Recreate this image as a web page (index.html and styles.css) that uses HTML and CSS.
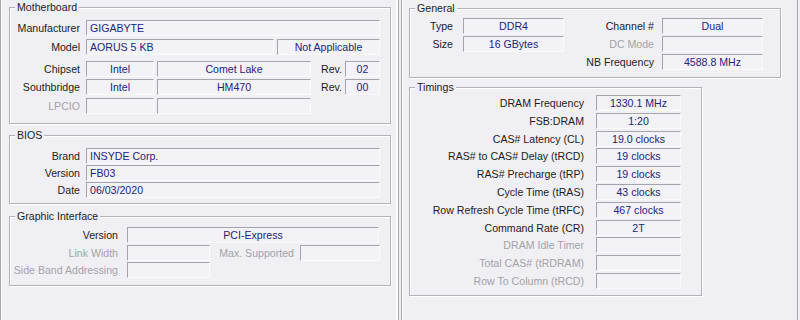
FILE: index.html
```html
<!DOCTYPE html>
<html>
<head>
<meta charset="utf-8">
<link rel="stylesheet" href="styles.css">
</head>
<body>
<div class="screen">
  <div class="win win-left">
    <div class="group mb">
      <span class="gtitle">Motherboard</span>
      <div class="row r-manu">
        <span class="lbl w70">Manufacturer</span>
        <span class="box left w294">GIGABYTE</span>
      </div>
      <div class="row r-model">
        <span class="lbl w70">Model</span>
        <span class="box left w188">AORUS 5 KB</span>
        <span class="box w103 ml3">Not Applicable</span>
      </div>
      <div class="row r-chip">
        <span class="lbl w70">Chipset</span>
        <span class="box w68">Intel</span>
        <span class="box w154 ml3">Comet Lake</span>
        <span class="lbl rev">Rev.</span>
        <span class="box w35">02</span>
      </div>
      <div class="row r-south">
        <span class="lbl w70">Southbridge</span>
        <span class="box w68">Intel</span>
        <span class="box w154 ml3">HM470</span>
        <span class="lbl rev">Rev.</span>
        <span class="box w35">00</span>
      </div>
      <div class="row r-lpc">
        <span class="lbl w70 dis">LPCIO</span>
        <span class="box w68"></span>
        <span class="box w154 ml3"></span>
      </div>
    </div>

    <div class="group bios">
      <span class="gtitle">BIOS</span>
      <div class="row">
        <span class="lbl w70">Brand</span>
        <span class="box left w294">INSYDE Corp.</span>
      </div>
      <div class="row g1">
        <span class="lbl w70">Version</span>
        <span class="box left w294">FB03</span>
      </div>
      <div class="row g1">
        <span class="lbl w70">Date</span>
        <span class="box left w294">06/03/2020</span>
      </div>
    </div>

    <div class="group gfx">
      <span class="gtitle">Graphic Interface</span>
      <div class="row">
        <span class="lbl w108">Version</span>
        <span class="box w252">PCI-Express</span>
      </div>
      <div class="row g2">
        <span class="lbl w108 dis">Link Width</span>
        <span class="box w83"></span>
        <span class="lbl dis maxs">Max. Supported</span>
        <span class="box w80"></span>
      </div>
      <div class="row g1">
        <span class="lbl w108 dis">Side Band Addressing</span>
        <span class="box w83"></span>
      </div>
    </div>
  </div>

  <div class="win win-right">
    <div class="group general">
      <span class="gtitle">General</span>
      <div class="ggrid">
        <span class="lbl">Type</span>
        <span class="box">DDR4</span>
        <span class="lbl">Channel #</span>
        <span class="box">Dual</span>
        <span class="lbl">Size</span>
        <span class="box">16 GBytes</span>
        <span class="lbl dis">DC Mode</span>
        <span class="box"></span>
        <span class="lbl c3">NB Frequency</span>
        <span class="box">4588.8 MHz</span>
      </div>
    </div>

    <div class="group timings">
      <span class="gtitle">Timings</span>
      <div class="tgrid">
        <span class="lbl">DRAM Frequency</span><span class="box">1330.1 MHz</span>
        <span class="lbl">FSB:DRAM</span><span class="box">1:20</span>
        <span class="lbl">CAS# Latency (CL)</span><span class="box">19.0 clocks</span>
        <span class="lbl">RAS# to CAS# Delay (tRCD)</span><span class="box">19 clocks</span>
        <span class="lbl">RAS# Precharge (tRP)</span><span class="box">19 clocks</span>
        <span class="lbl">Cycle Time (tRAS)</span><span class="box">43 clocks</span>
        <span class="lbl">Row Refresh Cycle Time (tRFC)</span><span class="box">467 clocks</span>
        <span class="lbl">Command Rate (CR)</span><span class="box">2T</span>
        <span class="lbl dis">DRAM Idle Timer</span><span class="box"></span>
        <span class="lbl dis">Total CAS# (tRDRAM)</span><span class="box"></span>
        <span class="lbl dis">Row To Column (tRCD)</span><span class="box"></span>
      </div>
    </div>
  </div>
</div>
</body>
</html>
```

FILE: styles.css
```css
* { box-sizing: border-box; }
html, body {
  margin: 0;
  padding: 0;
  background: #f0eff4;
}
body {
  font-family: "Liberation Sans", Arial, sans-serif;
  font-size: 10.6px;
  color: #1c1c1c;
  width: 800px;
  height: 320px;
  overflow: hidden;
}
.screen {
  display: flex;
  height: 320px;
}
.win {
  height: 320px;
  display: flex;
  flex-direction: column;
}
.win-left {
  width: 399px;
  border-left: 1px solid #a6a6ae;
  border-right: 1px solid #a6a6ae;
  box-shadow: inset -2px 0 0 #ffffff, inset 1px 0 0 #ffffff;
  padding-left: 8px;
}
.win-right {
  width: 397px;
  margin-left: 2px;
  border-left: 1px solid #a6a6ae;
  border-right: 1px solid #a6a6ae;
  box-shadow: inset 1px 0 0 #ffffff;
  padding-left: 7px;
}
.group {
  position: relative;
  border: 1px solid #b3b2ba;
  box-shadow: inset 1px 1px 0 #ffffff, 1px 1px 0 #ffffff;
}
.gtitle {
  position: absolute;
  top: -8px;
  left: 5px;
  padding: 0 2px;
  background: #f0eff4;
  line-height: 14px;
  color: #1c1c1c;
}
.row {
  display: flex;
  align-items: center;
  height: 16px;
}
.lbl {
  text-align: right;
  white-space: nowrap;
  line-height: 16px;
}
.dis { color: #a3a3a8; }
.box {
  display: block;
  height: 16px;
  line-height: 14px;
  border: 1px solid;
  border-color: #a4a4ac #fbfbfd #fbfbfd #a4a4ac;
  background: #f3f2f7;
  color: #24247c;
  text-align: center;
  white-space: nowrap;
  overflow: hidden;
}
.box.left { text-align: left; padding-left: 3px; }

.w70 { width: 70px; margin-right: 6px; }
.w108 { width: 108px; margin-right: 9px; }
.w294 { width: 294px; }
.w188 { width: 188px; }
.w103 { width: 103px; }
.w68 { width: 68px; }
.w154 { width: 154px; }
.w35 { width: 35px; }
.w252 { width: 252px; }
.w83 { width: 83px; }
.w80 { width: 80px; }
.ml3 { margin-left: 3px; }
.rev { width: 31px; margin-right: 3px; }
.maxs { width: 84px; margin-right: 6px; }
.g1 { margin-top: 1px; }
.g2 { margin-top: 2px; }

/* left window groups */
.mb {
  width: 382px;
  margin-top: 7px;
  padding: 12px 0 9px 0;
}
.r-model { margin-top: 3px; }
.r-chip { margin-top: 6px; }
.r-south { margin-top: 2px; }
.r-lpc { margin-top: 3px; }

.bios {
  width: 382px;
  margin-top: 11px;
  padding: 12px 0 5px 0;
}
.gfx {
  width: 382px;
  margin-top: 12px;
  padding: 10px 0 7px 0;
}

/* right window */
.general {
  width: 372px;
  margin-top: 8px;
  padding: 9px 0 7px 0;
}
.ggrid {
  display: grid;
  grid-template-columns: 53px 101px 98px 101px;
  grid-auto-rows: 16px;
  row-gap: 2px;
}
.ggrid .lbl { padding-right: 8px; }
.ggrid .lbl:nth-child(1), .ggrid .lbl:nth-child(5) { padding-right: 10px; }
.ggrid .c3 { grid-column: 3; }

.timings {
  width: 293px;
  margin-top: 9px;
  padding: 7px 0 6px 0;
}
.tgrid {
  display: grid;
  grid-template-columns: 186px 85px;
  grid-auto-rows: 16px;
  row-gap: 1.8px;
}
.tgrid .lbl { padding-right: 12px; }
```
